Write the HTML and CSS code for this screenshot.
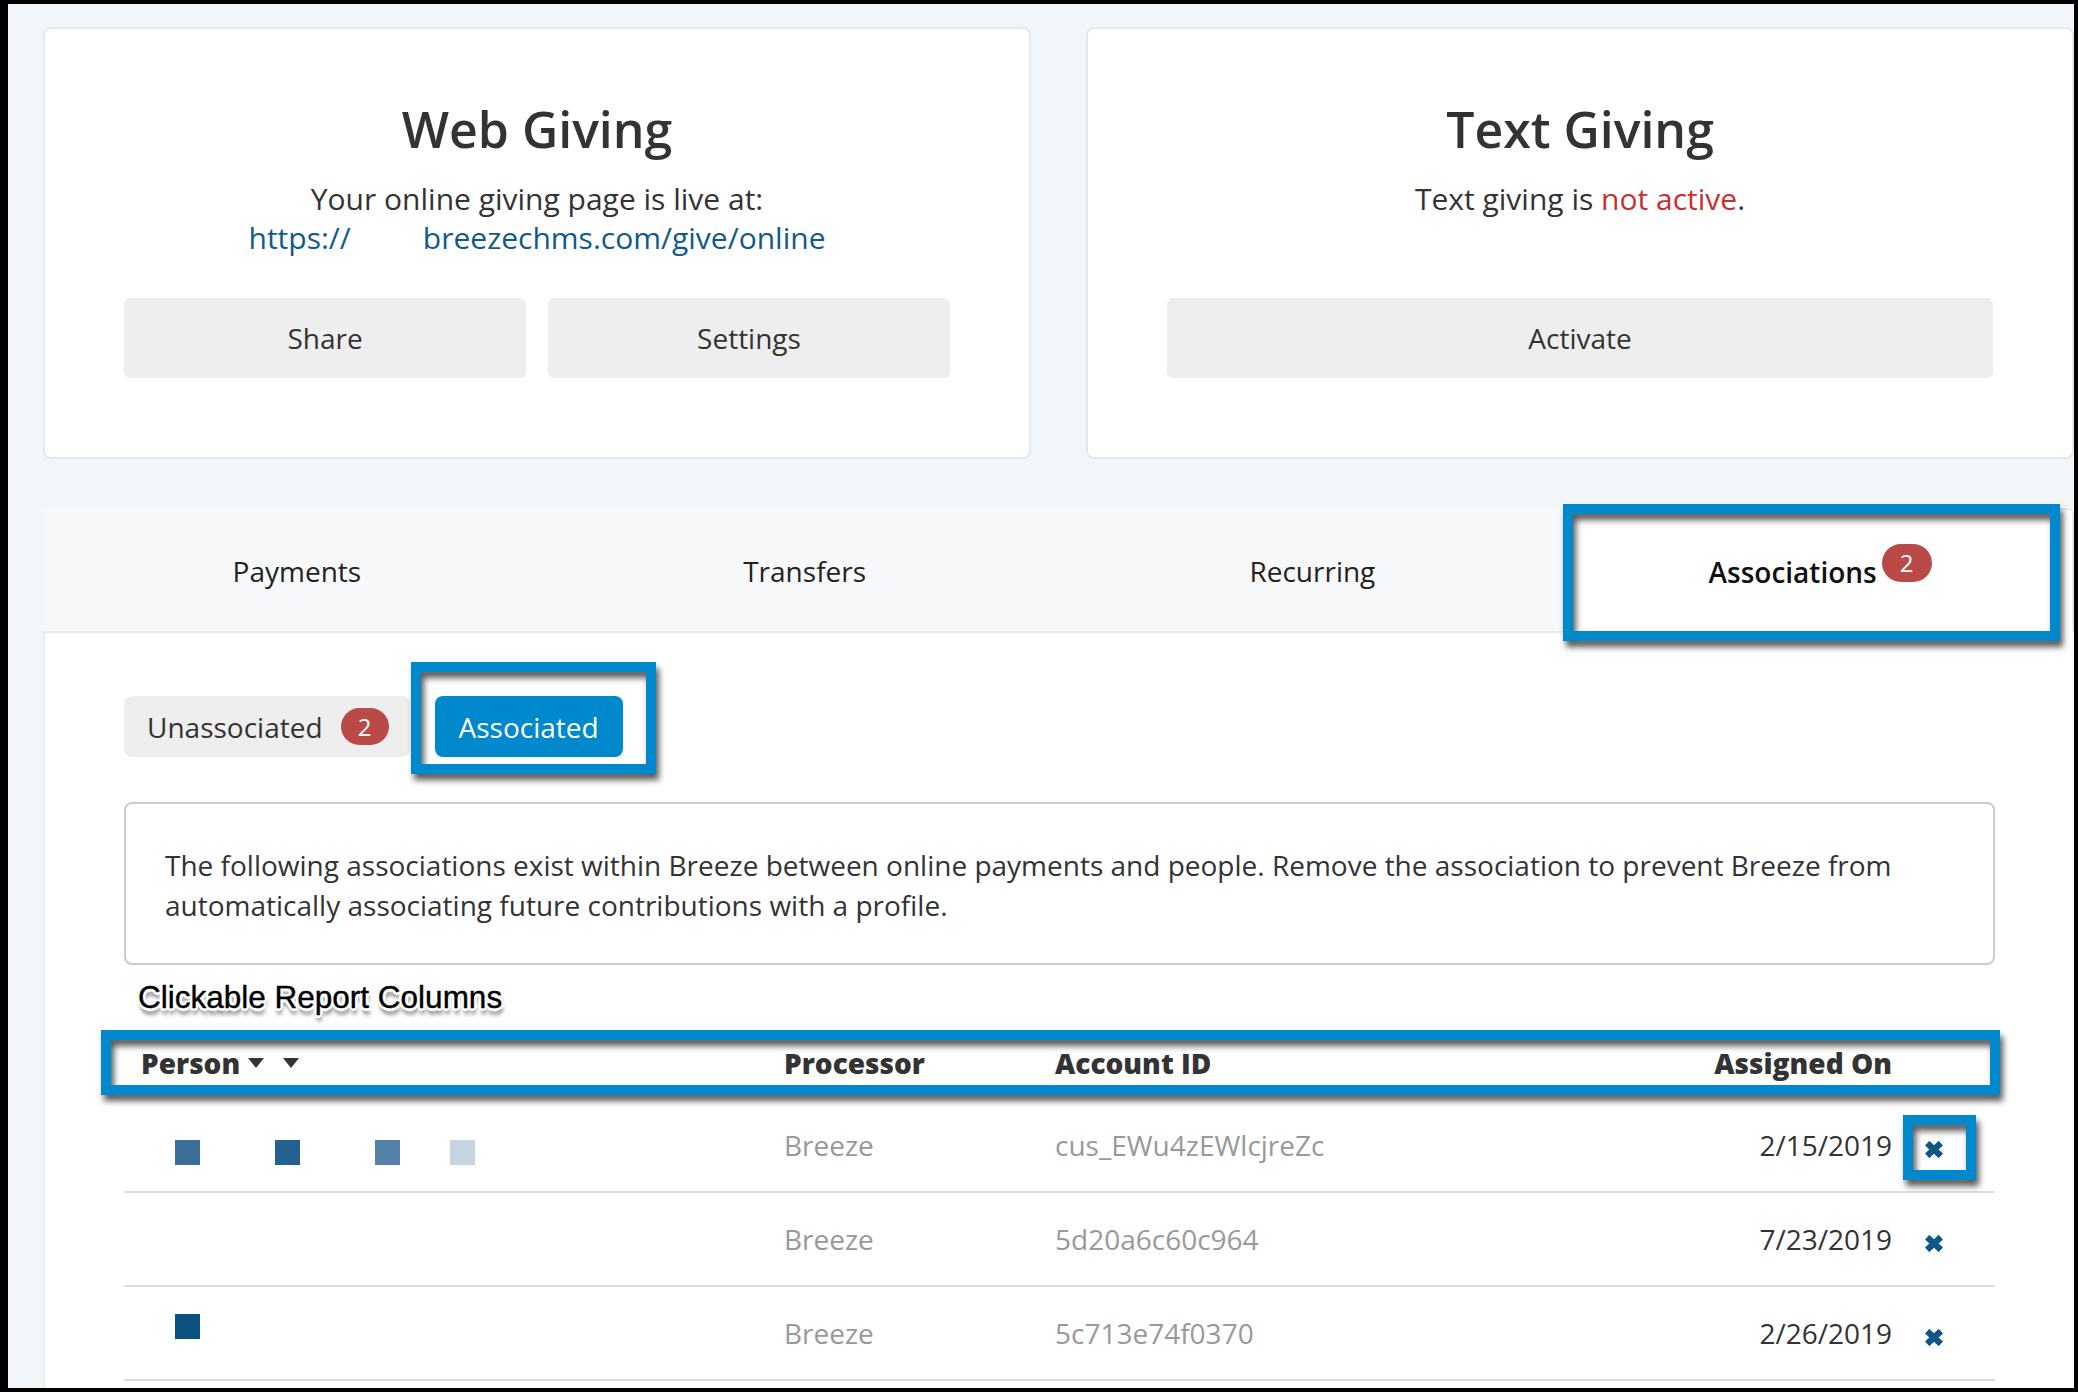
FILE: index.html
```html
<!DOCTYPE html>
<html lang="en">
<head>
    <meta charset="UTF-8">
    <meta name="viewport" content="width=device-width, initial-scale=1.0">
    <title>Giving - Associations</title>
    <link rel="stylesheet" href="styles.css">
</head>
<body>
<div class="frame">
    <div class="page">

        <div class="giving-cards">
            <section class="card">
                <h2 class="card-title">Web Giving</h2>
                <div class="card-text">
                    <p>Your online giving page is live at:</p>
                    <p><a class="giving-link" href="#">https://<span class="redacted"></span>breezechms.com/give/online</a></p>
                </div>
                <div class="card-actions">
                    <button class="btn">Share</button>
                    <button class="btn">Settings</button>
                </div>
            </section>

            <section class="card">
                <h2 class="card-title">Text Giving</h2>
                <div class="card-text">
                    <p>Text giving is <span class="inactive">not active</span>.</p>
                </div>
                <div class="card-actions">
                    <button class="btn">Activate</button>
                </div>
            </section>
        </div>

        <nav class="tabs">
            <a class="tab" href="#">Payments</a>
            <a class="tab" href="#">Transfers</a>
            <a class="tab" href="#">Recurring</a>
            <a class="tab active" href="#">Associations<span class="badge badge-tab">2</span>
                <span class="callout callout-tab"></span>
            </a>
        </nav>

        <div class="panel">
            <div class="filter-pills">
                <a class="pill" href="#">Unassociated<span class="badge badge-pill">2</span></a>
                <a class="pill pill-active" href="#">Associated
                    <span class="callout callout-pill"></span>
                </a>
            </div>

            <div class="info-box">
                The following associations exist within Breeze between online payments and people. Remove the association to prevent Breeze from automatically associating future contributions with a profile.
            </div>

            <div class="callout-label">Clickable Report Columns</div>

            <div class="report">
                <div class="report-row report-head">
                    <div class="col-person">Person<span class="caret"></span><span class="caret caret-2"></span></div>
                    <div>Processor</div>
                    <div>Account ID</div>
                    <div class="col-date">Assigned On</div>
                    <div></div>
                    <span class="callout callout-head"></span>
                </div>

                <div class="report-row">
                    <div class="col-person person-low">
                        <span class="blur-px px-a"></span>
                        <span class="blur-px px-b"></span>
                        <span class="blur-px px-c"></span>
                        <span class="blur-px px-d"></span>
                    </div>
                    <div class="muted">Breeze</div>
                    <div class="muted">cus_EWu4zEWlcjreZc</div>
                    <div class="col-date">2/15/2019</div>
                    <div class="col-action">
                        <svg class="remove" viewBox="0 0 19 16"><path d="M3 2 L16 14 M16 2 L3 14"/></svg>
                        <span class="callout callout-x"></span>
                    </div>
                </div>

                <div class="report-row">
                    <div class="col-person"></div>
                    <div class="muted">Breeze</div>
                    <div class="muted">5d20a6c60c964</div>
                    <div class="col-date">7/23/2019</div>
                    <div class="col-action">
                        <svg class="remove" viewBox="0 0 19 16"><path d="M3 2 L16 14 M16 2 L3 14"/></svg>
                    </div>
                </div>

                <div class="report-row">
                    <div class="col-person person-high">
                        <span class="blur-px px-e"></span>
                    </div>
                    <div class="muted">Breeze</div>
                    <div class="muted">5c713e74f0370</div>
                    <div class="col-date">2/26/2019</div>
                    <div class="col-action">
                        <svg class="remove" viewBox="0 0 19 16"><path d="M3 2 L16 14 M16 2 L3 14"/></svg>
                    </div>
                </div>
            </div>
        </div>

    </div>
</div>
</body>
</html>
```

FILE: styles.css
```css
* {
    box-sizing: border-box;
}
body {
    margin: 0;
    font-family: "Open Sans", Arial, sans-serif;
    color: #333;
}
.frame {
    width: 2078px;
    height: 1392px;
    border-style: solid;
    border-color: #000;
    border-width: 4px 4px 4px 8px;
    background-color: #f3f6f9;
    overflow: hidden;
}
.page {
    padding: 23px 0 0 35px;
}

/* giving cards */
.giving-cards {
    display: grid;
    grid-template-columns: 1fr 1fr;
    column-gap: 55px;
}
.card {
    background-color: #fff;
    border: 2px solid #e4e9ef;
    border-radius: 8px;
    padding: 70px 79px 79px 79px;
    text-align: center;
}
.card-title {
    margin: 0;
    font-size: 50px;
    line-height: 60px;
    font-weight: 600;
    color: #333;
}
.card-text {
    margin-top: 20px;
    min-height: 78px;
    font-size: 30px;
    line-height: 39px;
}
.card-text p {
    margin: 0;
}
.giving-link {
    color: #0f5a8c;
    text-decoration: none;
}
.redacted {
    display: inline-block;
    width: 72px;
}
.inactive {
    color: #c9302c;
}
.card-actions {
    margin-top: 41px;
    display: flex;
    gap: 22px;
}
.btn {
    flex: 1;
    height: 80px;
    border: none;
    border-radius: 6px;
    background-color: #eee;
    font-family: "Open Sans", Arial, sans-serif;
    font-size: 28px;
    color: #333;
}

/* tabs */
.tabs {
    margin-top: 49px;
    display: grid;
    grid-template-columns: repeat(4, 1fr);
    background-color: #f6f8fa;
}
.tab {
    position: relative;
    height: 125px;
    display: flex;
    align-items: center;
    justify-content: center;
    padding-top: 2px;
    border-bottom: 2px solid #e6ebf0;
    font-size: 28px;
    color: #222;
    text-decoration: none;
}
.tab.active {
    background-color: #fff;
    border: 2px solid #e6ebf0;
    border-bottom-color: #fff;
    border-radius: 6px 6px 0 0;
    font-weight: 600;
    color: #111;
}

.badge {
    display: inline-block;
    background-color: #b94a48;
    color: #fff;
    font-weight: 400;
    text-align: center;
}
.badge-tab {
    width: 50px;
    height: 38px;
    line-height: 38px;
    margin-left: 5px;
    border-radius: 19px;
    font-size: 24px;
    position: relative;
    top: -9px;
}
.badge-pill {
    width: 48px;
    height: 37px;
    line-height: 37px;
    margin-left: 18px;
    border-radius: 19px;
    font-size: 24px;
}

/* annotation boxes */
.callout {
    position: absolute;
    border: 10px solid #0088cc;
    filter: drop-shadow(3px 6px 3px rgba(0, 0, 0, 0.65));
    pointer-events: none;
}
.callout-tab {
    left: -5px;
    top: -6px;
    width: 497px;
    height: 137px;
}
.callout-pill {
    left: -24px;
    top: -34px;
    width: 245px;
    height: 112px;
}
.callout-head {
    left: -23px;
    top: 2px;
    width: 1899px;
    height: 65px;
}
.callout-x {
    left: 11px;
    top: 16px;
    width: 73px;
    height: 65px;
}

/* panel */
.panel {
    background-color: #fff;
    border-left: 2px solid #e8edf2;
    height: 800px;
    padding: 63px 79px 0 79px;
}
.filter-pills {
    display: flex;
    gap: 25px;
}
.pill {
    position: relative;
    height: 61px;
    display: flex;
    align-items: center;
    padding: 0 21px 0 23px;
    border-radius: 8px;
    background-color: #eee;
    font-size: 28px;
    color: #333;
    text-decoration: none;
}
.pill-active {
    padding: 0 24px;
    background-color: #0088cc;
    color: #fff;
}
.info-box {
    margin-top: 45px;
    border: 2px solid #ccc;
    border-radius: 8px;
    padding: 41px 40px 38px 39px;
    font-size: 28px;
    line-height: 40px;
    color: #333;
}
.callout-label {
    margin: 12px 0 0 14px;
    font-family: "Liberation Sans", Arial, sans-serif;
    font-size: 31.5px;
    line-height: 40px;
    color: #000;
    -webkit-text-stroke: 0.4px #000;
    text-shadow: 2px 0 0 #fff, -2px 0 0 #fff, 0 2px 0 #fff, 0 -2px 0 #fff,
        2px 2px 0 #fff, -2px 2px 0 #fff, 2px -2px 0 #fff, -2px -2px 0 #fff,
        3px 0 0 #fff, -3px 0 0 #fff, 0 3px 0 #fff,
        1px 6px 4px rgba(0, 0, 0, 0.7);
}

/* report table */
.report {
    margin-top: 11px;
}
.report-row {
    position: relative;
    display: grid;
    grid-template-columns: 660px 271px 637px 200px 103px;
    align-items: center;
    height: 94px;
    border-bottom: 2px solid #ddd;
    font-size: 28px;
}
.report-head {
    height: 71px;
    padding-bottom: 2px;
    border-bottom: none;
    font-weight: 800;
    color: #333;
}
.report-head .col-person {
    padding-left: 17px;
}
.caret {
    display: inline-block;
    margin-left: 8px;
    border-left: 8px solid transparent;
    border-right: 8px solid transparent;
    border-top: 10px solid #333;
}
.caret-2 {
    margin-left: 19px;
}
.col-date {
    text-align: right;
}
.col-action {
    position: relative;
    height: 100%;
    display: flex;
    align-items: center;
    padding-left: 32px;
}
.muted {
    color: #999;
}
.remove {
    width: 20px;
    height: 17px;
    margin-top: 8px;
}
.remove path {
    stroke: #0d5686;
    stroke-width: 6;
    fill: none;
}

.col-person {
    display: flex;
    align-items: center;
    height: 100%;
}
.person-low {
    padding-top: 14px;
}
.person-high {
    padding-bottom: 14px;
}
.blur-px {
    width: 25px;
    height: 25px;
}
.px-a {
    margin-left: 51px;
    background-color: #3b6f99;
}
.px-b {
    margin-left: 75px;
    background-color: #23618f;
}
.px-c {
    margin-left: 75px;
    background-color: #5481a7;
}
.px-d {
    margin-left: 50px;
    background-color: #c5d5e2;
}
.px-e {
    margin-left: 51px;
    background-color: #0b5281;
}
```
